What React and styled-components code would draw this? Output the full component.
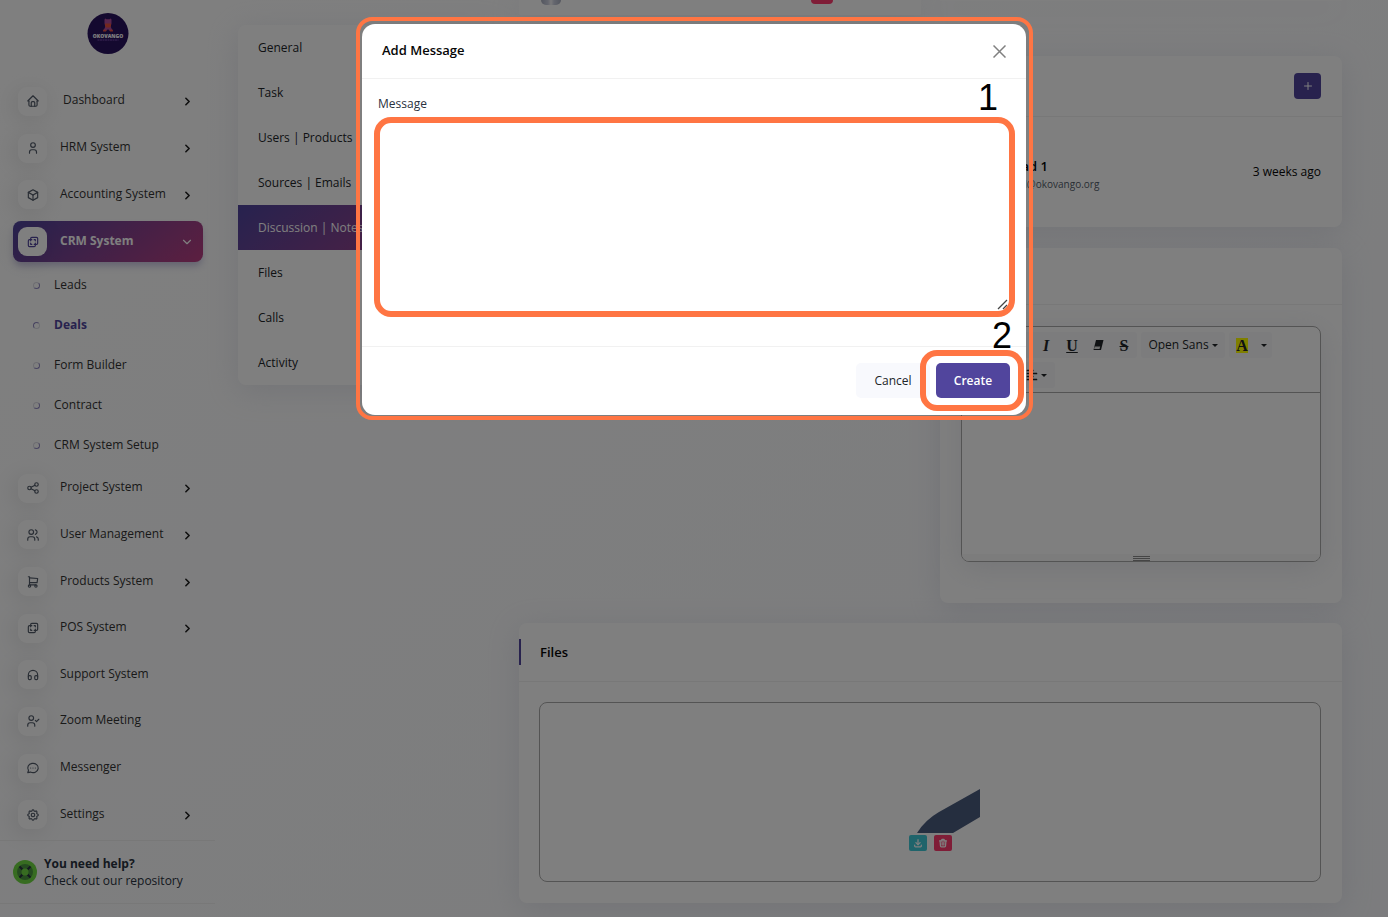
import React from "react";
import styled, { createGlobalStyle } from "styled-components";
import {
  TbHome, TbUser, TbBox, TbLayersDifference, TbShare, TbUsers, TbShoppingCart,
  TbHeadphones, TbSettings, TbChevronRight, TbChevronDown, TbPlus, TbDownload, TbTrash,
} from "react-icons/tb";
import { FaAlignLeft } from "react-icons/fa";

const Global = createGlobalStyle`
  *, *::before, *::after { box-sizing: border-box; }
  html, body { margin: 0; height: 100%; }
  body {
    overflow: hidden;
    font-family: "Open Sans", "Noto Sans", sans-serif;
    font-size: 12px;
    line-height: 20px;
    color: #293240;
    background: linear-gradient(141deg, #ffffff 3%, #f8f9fc 100%) fixed;
  }
  button, textarea { font: inherit; }
  a { color: inherit; text-decoration: none; }
  h2, h3, p, ul { margin: 0; padding: 0; font-weight: 400; }
  ul { list-style: none; }
`;

const primary = "#51459d";
const brandGradient = "linear-gradient(141deg, #51459d 3%, rgba(255, 58, 110, 0.6)), #51459d";
const accent = "#ff7543";

const Page = styled.div`
  display: flex;
  height: 100vh;
  overflow: hidden;
`;

const Sidebar = styled.aside`
  display: flex;
  flex-direction: column;
  flex: 0 0 215px;
`;

const LogoLink = styled.a`
  display: flex;
  justify-content: center;
  padding: 12px 0 24px;
  height: 78px;
  & svg { width: 42px; height: 42px; }
`;

const NavGroup = styled.ul`
  display: grid;
  grid-auto-rows: 1fr;
  align-items: center;
  height: ${(p) => p.$height}px;
  padding: 0 12px 0 13px;
`;

const NavLink = styled.a`
  display: flex;
  align-items: center;
  height: 41px;
  padding: 0 9px 0 5px;
  border-radius: 8px;
  color: ${(p) => (p.$active ? "#fff" : "#333")};
  font-weight: ${(p) => (p.$active ? 700 : 400)};
  background: ${(p) => (p.$active ? brandGradient : "none")};
  box-shadow: ${(p) => (p.$active ? "0 5px 7px -1px rgba(81, 69, 157, 0.3)" : "none")};
`;

const NavIcon = styled.span`
  display: grid;
  place-items: center;
  width: 29px;
  height: 29px;
  margin-right: 13px;
  border-radius: 9px;
  background: #fff;
  color: ${(p) => (p.$active ? primary : "#525b69")};
  font-size: 14px;
  box-shadow: -3px 4px 23px rgba(0, 0, 0, 0.1);
`;

const NavLabel = styled.span`
  flex: 1;
  padding-left: ${(p) => (p.$indent ? 3 : 0)}px;
  padding-bottom: 2px;
`;

const NavArrow = styled.span`
  display: flex;
  padding-top: ${(p) => (p.$active ? 0 : 1)}px;
  color: ${(p) => (p.$active ? "#fff" : "#222")};
  font-size: ${(p) => (p.$active ? 14 : 13)}px;
`;

const SubNav = styled.ul`
  display: flex;
  flex-direction: column;
`;

const SubLink = styled.a`
  display: flex;
  align-items: center;
  gap: 14px;
  height: 40px;
  padding-left: 33px;
  color: ${(p) => (p.$active ? primary : "#333")};
  font-weight: ${(p) => (p.$active ? 700 : 400)};
  &::before {
    content: "";
    width: 7px;
    height: 7px;
    border-radius: 50%;
    border: 1px solid;
    border-color: ${(p) => (p.$active ? "#8f87c0 #dcdce4 #dcdce4 #8f87c0" : "#dcdce4 #8f87c0 #8f87c0 #dcdce4")};
  }
`;

const Help = styled.a`
  display: flex;
  align-items: center;
  gap: 7px;
  height: 64px;
  margin-top: 2px;
  padding-left: 13px;
  border-top: 1px solid #f1f1f1;
  border-bottom: 1px solid #f1f1f1;
  line-height: 17px;
  & svg { width: 24px; height: 24px; }
`;

const HelpText = styled.span`
  display: flex;
  flex-direction: column;
`;

const Main = styled.main`
  display: flex;
  align-items: flex-start;
  flex: 1;
  gap: 21px;
  min-width: 0;
  padding: 0 46px 0 23px;
`;

const Card = styled.section`
  border-radius: 8px;
  background: #fff;
  box-shadow: 0 6px 30px rgba(182, 186, 203, 0.3);
`;

const TabCard = styled(Card)`
  flex: 0 0 260px;
  margin-top: 25px;
  overflow: hidden;
`;

const TabLink = styled.a`
  display: block;
  padding: 13px 20px 12px;
  color: ${(p) => (p.$active ? "#fff" : "#212529")};
  background: ${(p) => (p.$active ? brandGradient : "none")};
`;

const Content = styled.div`
  flex: 1;
  min-width: 0;
  display: grid;
  grid-template-columns: 1fr 1fr;
  gap: 20px 19px;
`;

const Column = styled.div`
  display: flex;
  flex-direction: column;
  gap: 21px;
`;

const TopCard = styled(Card)`
  display: flex;
  justify-content: space-between;
  align-items: flex-start;
  height: 15px;
  padding: 0 88px 0 22px;
  border-radius: 0 0 2px 2px;
`;

const ClippedCard = styled(Card)`
  height: 1px;
  margin-bottom: 34px;
`;

const AvatarTail = styled.span`
  width: 20px;
  height: 5px;
  border-radius: 0 0 10px 10px;
  background: linear-gradient(90deg, #a9aebf, #c9cddd 35%, #f3f3f6 50%, #c9cddd 65%, #a9aebf);
`;

const BadgeTail = styled.span`
  width: 22px;
  height: 4px;
  border-radius: 0 0 6px 6px;
  background: #ff3a6e;
`;

const CardHead = styled.header`
  display: flex;
  align-items: center;
  justify-content: ${(p) => (p.$end ? "flex-end" : "flex-start")};
  height: ${(p) => p.$height}px;
  padding: 0 21px;
  border-bottom: 1px solid #f1f1f1;
`;

const CardTitle = styled.h3`
  display: flex;
  align-items: center;
  height: 26px;
  margin-left: -21px;
  padding-left: 19px;
  border-left: 2px solid ${primary};
  color: #060606;
  font-size: 13px;
  font-weight: 600;
`;

const AddButton = styled.button`
  display: grid;
  place-items: center;
  width: 27px;
  height: 26px;
  padding: 0;
  border: 0;
  border-radius: 4px;
  background: ${primary};
  color: #fff;
  font-size: 12px;
`;

const MessageRow = styled.div`
  display: flex;
  align-items: center;
  justify-content: space-between;
  height: 110px;
  padding: 0 21px 0 67px;
  color: #060606;
`;

const Sender = styled.div`
  padding-top: 6px;
  font-size: 13px;
  font-weight: 600;
  line-height: 17px;
`;

const Email = styled.p`
  color: #525b69;
  font-size: 10px;
  line-height: 18px;
`;

const EditorWrap = styled.div`
  padding: 21px 21px 41px;
`;

const Editor = styled.div`
  border: 1px solid #a9a9a9;
  border-radius: 8px;
  overflow: hidden;
  box-shadow: 0 6px 30px rgba(182, 186, 203, 0.3);
`;

const Toolbar = styled.div`
  display: flex;
  flex-direction: column;
  gap: 4px;
  height: 66px;
  padding: 5px;
  border-bottom: 1px solid #a9a9a9;
`;

const ToolRow = styled.div`
  display: flex;
  gap: 4px;
`;

const ToolGroup = styled.div`
  display: flex;
  height: 26px;
  border-radius: 3px;
  background: #f8f9fa;
`;

const Tool = styled.button`
  display: flex;
  align-items: center;
  justify-content: center;
  gap: 3px;
  width: ${(p) => p.$width || 26}px;
  padding: 0;
  border: 0;
  background: none;
  color: #212529;
  white-space: nowrap;
`;

const Glyph = styled.span`
  font-family: "Liberation Serif", serif;
  font-size: 16px;
  font-weight: 700;
  line-height: 15px;
  font-style: ${(p) => (p.$italic ? "italic" : "normal")};
  text-decoration: ${(p) => p.$line || "none"};
  background: ${(p) => (p.$mark ? "#ffff00" : "none")};
`;

const Caret = styled.span`
  border: 3px solid transparent;
  border-top-color: #212529;
  border-bottom: 0;
`;

const EditArea = styled.div`
  height: 161px;
`;

const Grip = styled.div`
  display: flex;
  flex-direction: column;
  align-items: center;
  gap: 1px;
  height: 7px;
  padding-top: 2px;
  background: #f8f8f8;
  & span { width: 17px; height: 1px; background: #8a8a8a; }
`;

const FilesCard = styled(Card)`
  grid-column: 1 / -1;
`;

const DropWrap = styled.div`
  padding: 20px 21px 21px 20px;
`;

const DropZone = styled.div`
  display: flex;
  flex-direction: column;
  align-items: center;
  justify-content: flex-end;
  height: 180px;
  padding-bottom: 30px;
  border: 1px solid #a9a9a9;
  border-radius: 8px;
`;

const FilePreview = styled.div`
  display: flex;
  flex-direction: column;
  gap: 2px;
  width: 100px;
  & > svg { width: 100px; height: 100px; }
`;

const FileActions = styled.div`
  display: flex;
  gap: 7px;
  padding-left: 29px;
`;

const FileButton = styled.button`
  display: grid;
  place-items: center;
  width: 18px;
  height: 16px;
  padding: 0;
  border: 0;
  border-radius: 2px;
  background: ${(p) => p.$color};
  color: #fff;
  font-size: 10px;
  & svg { stroke-width: 3; }
`;

const Backdrop = styled.div`
  position: fixed;
  inset: 0;
  display: flex;
  align-items: flex-start;
  justify-content: center;
  padding-top: 24px;
  background: rgba(0, 0, 0, 0.5);
`;

const Dialog = styled.form`
  position: relative;
  width: 664px;
  max-width: calc(100% - 32px);
  border-radius: 13px;
  background: #fff;
`;

const DialogHead = styled.header`
  display: flex;
  align-items: center;
  justify-content: space-between;
  height: 55px;
  padding: 0 20px;
  border-bottom: 1px solid #f1f1f1;
`;

const DialogTitle = styled.h2`
  padding-bottom: 2px;
  color: #060606;
  font-size: 13px;
  font-weight: 600;
`;

const CloseButton = styled.button`
  display: flex;
  padding: 0;
  border: 0;
  background: none;
  color: #808080;
  & svg { width: 13px; height: 13px; }
`;

const DialogBody = styled.div`
  padding: 15px 16px 35px;
`;

const Label = styled.label`
  display: block;
  margin-bottom: 9px;
`;

const Field = styled.div`
  position: relative;
  margin-left: 1px;
  height: 188px;
`;

const TextArea = styled.textarea`
  display: block;
  width: 100%;
  height: 188px;
  padding: 12px;
  border: 0;
  outline: 0;
  resize: none;
`;

const ResizeMark = styled.svg`
  position: absolute;
  right: 2px;
  bottom: 1px;
  width: 11px;
  height: 11px;
  pointer-events: none;
`;

const DialogFoot = styled.footer`
  display: flex;
  justify-content: flex-end;
  gap: 6px;
  padding: 16px 16px 17px;
  border-top: 1px solid #f1f1f1;
`;

const Button = styled.button`
  width: 74px;
  height: 35px;
  padding: 0;
  border: 0;
  border-radius: 5px;
  background: ${(p) => (p.$primary ? primary : "#f8f9fd")};
  color: ${(p) => (p.$primary ? "#fff" : "#212529")};
  font-weight: ${(p) => (p.$primary ? 600 : 400)};
`;

const CreateSlot = styled.div`
  position: relative;
`;

const Ring = styled.span`
  position: absolute;
  inset: ${(p) => p.$inset};
  border: ${(p) => p.$width}px solid ${accent};
  border-radius: ${(p) => p.$radius}px;
  pointer-events: none;
`;

const Step = styled.span`
  position: absolute;
  right: ${(p) => p.$right}px;
  bottom: calc(100% + ${(p) => p.$lift}px);
  color: #000;
  font: 36px/40px "Liberation Sans", Arial, sans-serif;
`;

const Logo = () => (
  <svg viewBox="0 0 42 42" role="img" aria-label="Okovango">
    <circle cx="21" cy="21.500" r="20.500" fill="#29125f" />
    <path d="M17.500 8q0-1.500 1-1.500l1 .8h3l1-.8q1 0 1 1.500v3.500l-.8 3 .8 2 1.500 2.500h-3l-1.500-1.500h-1l-1.500 1.500h-3l1.500-2.500 .8-2-.8-3z" fill="#b04d9c" />
    <path d="M18 11.500h6v2.500l-1 1.500h-4l-1-1.500zM16.500 17.500l3 .5-.5 1.500h-3zM25.500 17.500l-3 .5 .5 1.500h3z" fill="#e8503f" />
    <text x="21" y="25.500" textAnchor="middle" fontSize="5" fontWeight="800" fill="#fff" fontFamily="Open Sans, sans-serif">OKOVANGO</text>
    <path d="M10.500 28h21" stroke="#7a4fb0" strokeWidth="1" strokeDasharray="2 .5" />
  </svg>
);

const HelpIcon = () => (
  <svg viewBox="0 0 24 24" aria-hidden="true">
    <circle cx="12" cy="12" r="12" fill="#6fd943" />
    <circle cx="12" cy="12" r="8" fill="#4b9641" />
    <path d="M6.500 6.500l3 3M17.500 6.500l-3 3M6.500 17.500l3-3M17.500 17.500l-3-3" stroke="#293240" strokeWidth="2" />
    <circle cx="12" cy="12" r="3.500" fill="#6fd943" />
  </svg>
);

const LineIcon = ({ children }) => (
  <svg viewBox="0 0 24 24" width="1em" height="1em" fill="none" stroke="currentColor" strokeWidth="2" strokeLinecap="round" strokeLinejoin="round" aria-hidden="true">
    {children}
  </svg>
);

const UserCheckIcon = () => (
  <LineIcon>
    <circle cx="9" cy="7" r="4" />
    <path d="M3 21v-2a4 4 0 0 1 4-4h4a4 4 0 0 1 4 4v2M16 11l2 2 4-4" />
  </LineIcon>
);

const MessageDotsIcon = () => (
  <LineIcon>
    <path d="M3 20l1.300-3.900a9 8 0 1 1 3.400 2.900L3 20M12 12v.01M8 12v.01M16 12v.01" />
  </LineIcon>
);

const EraserIcon = () => (
  <svg viewBox="0 0 12 12" width="12" height="12" aria-hidden="true">
    <path d="M4 1h7.500l-2.500 10h-7.500z" fill="currentColor" />
    <path d="M2.700 7.500h5.500l-.6 2.500h-5.500z" fill="#dcdcdc" />
  </svg>
);

const topItems = [
  { label: "Dashboard", icon: TbHome, arrow: true, indent: true },
  { label: "HRM System", icon: TbUser, arrow: true },
  { label: "Accounting System", icon: TbBox, arrow: true },
  { label: "CRM System", icon: TbLayersDifference, arrow: true, active: true },
];

const bottomItems = [
  { label: "Project System", icon: TbShare, arrow: true },
  { label: "User Management", icon: TbUsers, arrow: true },
  { label: "Products System", icon: TbShoppingCart, arrow: true },
  { label: "POS System", icon: TbLayersDifference, arrow: true },
  { label: "Support System", icon: TbHeadphones },
  { label: "Zoom Meeting", icon: UserCheckIcon },
  { label: "Messenger", icon: MessageDotsIcon },
  { label: "Settings", icon: TbSettings, arrow: true },
];

const subItems = ["Leads", "Deals", "Form Builder", "Contract", "CRM System Setup"];
const tabs = ["General", "Task", "Users | Products", "Sources | Emails", "Discussion | Notes", "Files", "Calls", "Activity"];

const NavItem = ({ label, icon: Icon, arrow, active, indent }) => (
  <li>
    <NavLink href="#" $active={active}>
      <NavIcon $active={active}><Icon /></NavIcon>
      <NavLabel $indent={indent}>{label}</NavLabel>
      {arrow && (
        <NavArrow $active={active}>
          {active ? <TbChevronDown /> : <TbChevronRight strokeWidth={3} />}
        </NavArrow>
      )}
    </NavLink>
  </li>
);

export default function App() {
  return (
    <>
      <Global />
      <Page>
        <Sidebar>
          <LogoLink href="#"><Logo /></LogoLink>
          <nav>
            <NavGroup $height={187}>
              {topItems.map((item) => <NavItem key={item.label} {...item} />)}
            </NavGroup>
            <SubNav>
              {subItems.map((label) => (
                <li key={label}><SubLink href="#" $active={label === "Deals"}>{label}</SubLink></li>
              ))}
            </SubNav>
            <NavGroup $height={373}>
              {bottomItems.map((item) => <NavItem key={item.label} {...item} />)}
            </NavGroup>
          </nav>
          <Help href="#">
            <HelpIcon />
            <HelpText><b>You need help?</b>Check out our repository</HelpText>
          </Help>
        </Sidebar>
        <Main>
          <TabCard as="nav">
            {tabs.map((tab) => (
              <TabLink key={tab} href="#" $active={tab === "Discussion | Notes"}>{tab}</TabLink>
            ))}
          </TabCard>
          <Content>
            <Column>
              <TopCard><AvatarTail /><BadgeTail /></TopCard>
            </Column>
            <Column>
              <ClippedCard />
              <Card>
                <CardHead $height={61} $end>
                  <AddButton type="button" aria-label="Add message"><TbPlus /></AddButton>
                </CardHead>
                <MessageRow>
                  <div><Sender>Lead 1</Sender><Email>lead@okovango.org</Email></div>
                  <span>3 weeks ago</span>
                </MessageRow>
              </Card>
              <Card>
                <CardHead $height={57} />
                <EditorWrap>
                  <Editor>
                    <Toolbar>
                      <ToolRow>
                        <ToolGroup>
                          <Tool type="button" aria-label="Style" $width={40} />
                          <Tool type="button" aria-label="Bold"><Glyph>B</Glyph></Tool>
                          <Tool type="button" aria-label="Italic"><Glyph $italic>I</Glyph></Tool>
                          <Tool type="button" aria-label="Underline"><Glyph $line="underline">U</Glyph></Tool>
                          <Tool type="button" aria-label="Clear"><EraserIcon /></Tool>
                          <Tool type="button" aria-label="Strike"><Glyph $line="line-through">S</Glyph></Tool>
                        </ToolGroup>
                        <ToolGroup><Tool type="button" $width={84}>Open Sans<Caret /></Tool></ToolGroup>
                        <ToolGroup>
                          <Tool type="button" aria-label="Text color"><Glyph $mark>A</Glyph></Tool>
                          <Tool type="button" aria-label="More colors" $width={17}><Caret /></Tool>
                        </ToolGroup>
                      </ToolRow>
                      <ToolRow>
                        <ToolGroup><Tool type="button" aria-label="List" $width={46} /></ToolGroup>
                        <ToolGroup><Tool type="button" aria-label="Paragraph" $width={38}><FaAlignLeft /><Caret /></Tool></ToolGroup>
                      </ToolRow>
                    </Toolbar>
                    <EditArea />
                    <Grip><span /><span /><span /></Grip>
                  </Editor>
                </EditorWrap>
              </Card>
            </Column>
            <FilesCard>
              <CardHead $height={59}><CardTitle>Files</CardTitle></CardHead>
              <DropWrap>
                <DropZone>
                  <FilePreview>
                    <svg viewBox="0 0 100 100" aria-hidden="true">
                      <path d="M37 100q8-13 22-21l41-23v28L73 100z" fill="#4b5c7e" />
                    </svg>
                    <FileActions>
                      <FileButton type="button" aria-label="Download" $color="#3ec9d6"><TbDownload /></FileButton>
                      <FileButton type="button" aria-label="Delete" $color="#ff3a6e"><TbTrash /></FileButton>
                    </FileActions>
                  </FilePreview>
                </DropZone>
              </DropWrap>
            </FilesCard>
          </Content>
        </Main>
      </Page>
      <Backdrop>
        <Dialog role="dialog" aria-labelledby="dialog-title">
          <DialogHead>
            <DialogTitle id="dialog-title">Add Message</DialogTitle>
            <CloseButton type="button" aria-label="Close">
              <svg viewBox="0 0 13 13" fill="none" stroke="currentColor" strokeWidth="1.500"><path d="M.5.5l12 12M12.500.5l-12 12" /></svg>
            </CloseButton>
          </DialogHead>
          <DialogBody>
            <Label htmlFor="message">Message</Label>
            <Field>
              <TextArea id="message" />
              <ResizeMark viewBox="0 0 11 11" aria-hidden="true">
                <path d="M1 10L10 1M6 10l4-4" stroke="#444" strokeWidth="1.300" />
              </ResizeMark>
              <Ring $inset="-6px -5px" $width={6} $radius={17} />
              <Step $right={12} $lift={5}>1</Step>
            </Field>
          </DialogBody>
          <DialogFoot>
            <Button type="button">Cancel</Button>
            <CreateSlot>
              <Button type="submit" $primary>Create</Button>
              <Ring $inset="-13px -14px -13px -16px" $width={6} $radius={17} />
              <Step $right={-2} $lift={7}>2</Step>
            </CreateSlot>
          </DialogFoot>
          <Ring $inset="-7px -7px -5px -6px" $width={4} $radius={16} />
        </Dialog>
      </Backdrop>
    </>
  );
}
